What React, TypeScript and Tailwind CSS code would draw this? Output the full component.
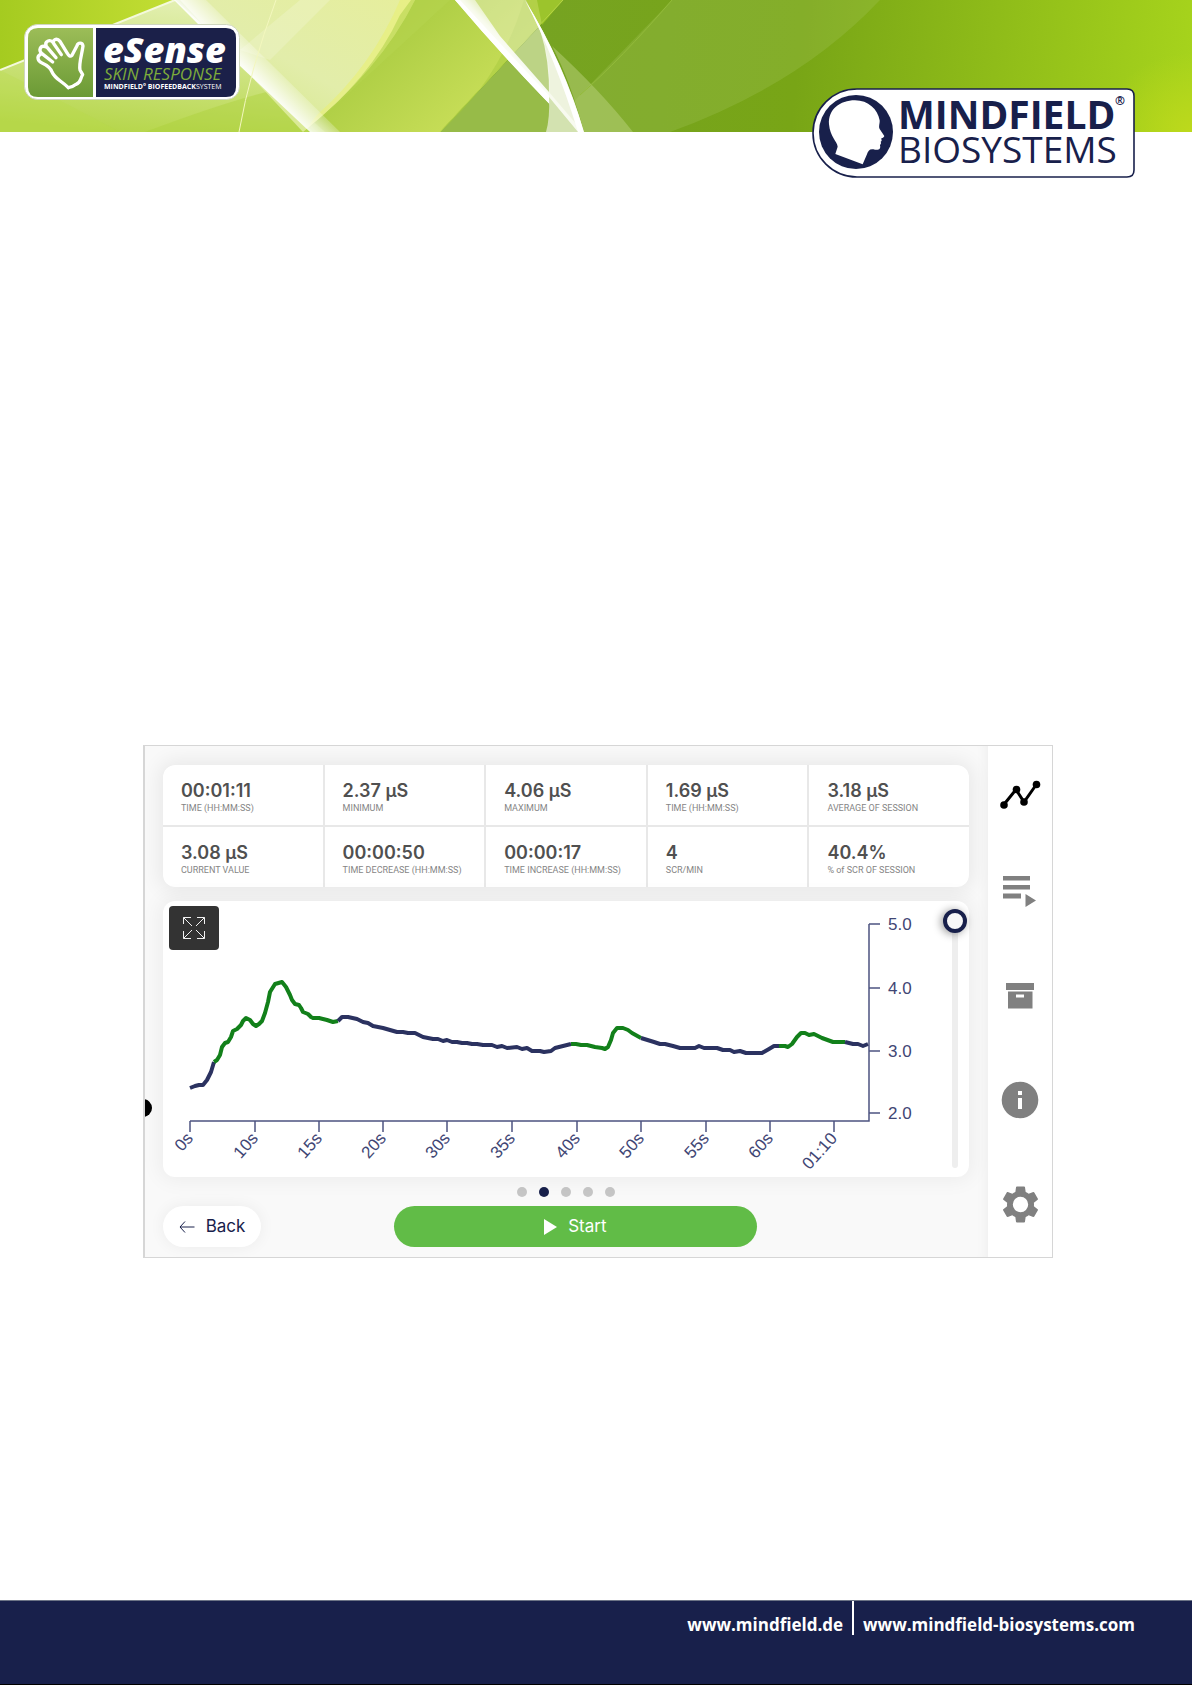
import { ReactNode } from "react"

type Stat = {
  value: string
  label: string
}

const stats: Stat[] = [
  { value: "00:01:11", label: "TIME (HH:MM:SS)" },
  { value: "2.37 µS", label: "MINIMUM" },
  { value: "4.06 µS", label: "MAXIMUM" },
  { value: "1.69 µS", label: "TIME (HH:MM:SS)" },
  { value: "3.18 µS", label: "AVERAGE OF SESSION" },
  { value: "3.08 µS", label: "CURRENT VALUE" },
  { value: "00:00:50", label: "TIME DECREASE (HH:MM:SS)" },
  { value: "00:00:17", label: "TIME INCREASE (HH:MM:SS)" },
  { value: "4", label: "SCR/MIN" },
  { value: "40.4%", label: "% of SCR OF SESSION" },
]

const xTicks = [
  { x: 27, label: "0s" },
  { x: 92, label: "10s" },
  { x: 156, label: "15s" },
  { x: 220, label: "20s" },
  { x: 284, label: "30s" },
  { x: 349, label: "35s" },
  { x: 414, label: "40s" },
  { x: 478, label: "50s" },
  { x: 543, label: "55s" },
  { x: 607, label: "60s" },
  { x: 671, label: "01:10" },
]

const yTicks = [
  { y: 23, label: "5.0" },
  { y: 87, label: "4.0" },
  { y: 150, label: "3.0" },
  { y: 212, label: "2.0" },
]

// green segments are the skin conductance responses
const segments = [
  { scr: false, points: "27,187 32,185 36,184 40,184 44,179 48,171 51,161" },
  {
    scr: true,
    points:
      "51,161 54,159 57,154 58,150 59,146 62,142 65,141 68,136 70,130 74,128 78,124 80,120 83,117 87,119 90,123 93,125 96,123 99,120 102,112 105,101 107,91 112,83 119,81 123,86 127,94 129,99 132,103 136,104 138,107 140,111 145,113 148,116 150,117 156,117 164,119 170,121 175,120",
  },
  {
    scr: false,
    points:
      "175,120 179,116 185,116 194,118 200,121 205,122 210,125 220,127 234,131 240,131 245,132 252,132 260,136 270,138 275,138 280,140 284,139 289,141 294,141 299,142 304,142 309,143 314,143 320,144 329,144 334,146 339,145 344,147 354,146 359,148 364,147 369,150 377,150 381,151 388,150 392,147 400,145 408,143",
  },
  {
    scr: true,
    points:
      "408,143 413,143 418,144 424,144 432,146 439,147 442,148 445,146 448,139 450,132 454,127 460,127 465,129 469,132 478,137",
  },
  {
    scr: false,
    points:
      "478,137 491,141 497,143 502,143 510,145 517,147 532,147 536,145 541,147 554,147 560,149 567,149 571,151 577,150 583,152 599,152 606,148 611,145 616,145",
  },
  { scr: true, points: "616,145 622,145 625,146 629,143 634,136 638,132 642,132 646,134 651,133 659,137 670,141 682,141" },
  { scr: false, points: "682,141 690,143 695,143 700,145 705,143" },
]

const HeaderArt = () => (
  <svg className="block h-full w-full" viewBox="0 0 1192 132" preserveAspectRatio="none" aria-hidden="true">
    <defs>
      <linearGradient id="lime" x1="0" x2="1" y1="0" y2="0">
        <stop offset="0" stopColor="#a5cb20" />
        <stop offset="1" stopColor="#c3de34" />
      </linearGradient>
      <linearGradient id="mist" x1="0.6" x2="0.35" y1="0" y2="1">
        <stop offset="0" stopColor="#e4f0b4" />
        <stop offset="1" stopColor="#b6d64b" />
      </linearGradient>
      <linearGradient id="pale" x1="0" x2="1" y1="1" y2="0">
        <stop offset="0" stopColor="#cfe57c" />
        <stop offset="0.5" stopColor="#e2edaa" />
        <stop offset="1" stopColor="#e6ee9c" />
      </linearGradient>
      <linearGradient id="mid" gradientUnits="userSpaceOnUse" x1="380" x2="470" y1="20" y2="120">
        <stop offset="0" stopColor="#a9cb41" />
        <stop offset="1" stopColor="#c8de58" />
      </linearGradient>
      <linearGradient id="leaf" gradientUnits="userSpaceOnUse" x1="540" x2="1192" y1="0" y2="60">
        <stop offset="0" stopColor="#76a322" />
        <stop offset="0.4" stopColor="#78a516" />
        <stop offset="1" stopColor="#a6d31c" />
      </linearGradient>
      {/* both ribbons fade away from their lower left edge */}
      <linearGradient id="ribbonLeft" gradientUnits="userSpaceOnUse" x1="240" x2="262" y1="66" y2="44">
        <stop offset="0" stopColor="#fff" stopOpacity="0.95" />
        <stop offset="1" stopColor="#fff" stopOpacity="0" />
      </linearGradient>
      <linearGradient id="ribbonRight" gradientUnits="userSpaceOnUse" x1="508" x2="532" y1="60" y2="36">
        <stop offset="0" stopColor="#fff" />
        <stop offset="0.3" stopColor="#fff" stopOpacity="0.85" />
        <stop offset="1" stopColor="#fff" stopOpacity="0" />
      </linearGradient>
      <radialGradient id="corner" cx="1" cy="1" r="1">
        <stop offset="0" stopColor="#bdd91c" />
        <stop offset="0.6" stopColor="#bdd91c" stopOpacity="0" />
      </radialGradient>
    </defs>
    <rect width="1192" height="132" fill="url(#leaf)" />
    <rect x="1040" width="152" height="132" fill="url(#corner)" />
    <path d="M580 95L672 0H880Q800 85 670 132H545Z" fill="#a6c45c" fillOpacity="0.28" />
    <path d="M0 0H563L440 132H0Z" fill="url(#mid)" />
    <path d="M537 0H563L542 25Z" fill="#96c11f" />
    <path d="M540 26 L440 132 H584Z" fill="#97bb48" />
    <path d="M563 0 L440 132" stroke="#bcd84c" strokeWidth="1" />
    <path d="M440 132Q500 80 524 0H563L440 132Z" fill="#a3c73c" fillOpacity="0.45" />
    <path d="M0 0H175L0 70Z" fill="url(#lime)" />
    <path d="M0 70L175 0L325 132H0Z" fill="url(#mist)" />
    <path d="M0 70L175 0" stroke="#f4f9dc" strokeWidth="2" />
    <path d="M0 70 Q60 100 120 132 H0Z" fill="#b9dd45" fillOpacity="0.25" />
    <path d="M145 132 Q230 100 275 90 L315 132Z" fill="#abd038" fillOpacity="0.4" />
    <path d="M180 0H415Q380 70 303 132Z" fill="url(#pale)" />
    <path d="M330 0 L270 60 L240 50 L300 0Z" fill="#f1f5cc" fillOpacity="0.4" />
    <path d="M415 0Q380 70 303 132L318 114Q372 66 400 0Z" fill="#e8ef7c" fillOpacity="0.7" />
    <path d="M400 15L411 0H450L400 46L325 115L303 132Q370 80 400 15Z" fill="#b6d44e" fillOpacity="0.6" />
    <path d="M174 0H206L340 132H310L240 66Z" fill="url(#ribbonLeft)" />
    <path d="M276 0Q250 70 239 132" fill="none" stroke="#f3f7be" strokeWidth="1" />
    <path d="M455 0H526L540 28Q553 70 549 95L580 132Q510 60 455 0Z" fill="#f4f8e2" fillOpacity="0.4" />
    <path d="M455 0Q510 65 577 132H583L549 92L500 36L475 0Z" fill="url(#ribbonRight)" />
    <path d="M455 0Q510 65 577 132H583Q520 65 460 0Z" fill="#ffffff" fillOpacity="0.9" />
    <path d="M525 0Q565 65 584 132H574L549 99Q550 60 540 30Q533 15 525 0Z" fill="#f7faee" fillOpacity="0.9" />
    <path d="M525 0Q562 60 584 132H578Q556 60 525 0Z" fill="#ffffff" />
    <path d="M549 97Q550 118 546 132H578Z" fill="#d3e2b0" />
    <path d="M552 46Q600 90 633 132H584Q570 80 552 46Z" fill="#b9d27c" fillOpacity="0.5" />
    <path d="M672 0Q620 60 580 95" fill="none" stroke="#93bb3a" strokeWidth="1" />
  </svg>
)

const ESenseLogo = () => (
  <svg
    className="block h-[76px] w-[216px] font-['Open_Sans',sans-serif]"
    viewBox="0 0 216 76"
    role="img"
    aria-label="eSense Skin Response"
  >
    <defs>
      <linearGradient id="palm" x1="0" x2="0" y1="0" y2="1">
        <stop offset="0" stopColor="#9cbd58" />
        <stop offset="1" stopColor="#6b9a35" />
      </linearGradient>
    </defs>
    <rect x="0.5" y="0.5" width="215" height="75" rx="13" fill="#fff" stroke="#cfd6bf" />
    <path d="M14 4H69V73H14Q4 73 4 63V14Q4 4 14 4Z" fill="url(#palm)" />
    <path d="M72 4H202Q212 4 212 14V63Q212 73 202 73H72Z" fill="#1b2049" />
    <g
      transform="scale(0.3333)"
      fill="none"
      stroke="#fff"
      strokeWidth="10"
      strokeLinecap="round"
      strokeLinejoin="round"
    >
      <path d="M133 191C144 190 150 186 156 181C172 176 168 164 176 152L168 138C164 118 174 90 177 66C175 54 162 56 159 65L144 94C139 99 134 96 130 88L108 52C98 40 82 48 90 60L112 92" />
      <path d="M88 56C78 44 60 52 67 67L96 101" />
      <path d="M64 68C49 63 42 79 54 89L86 114" />
      <path d="M50 91C36 98 42 112 54 117C70 124 80 132 84 144C94 166 110 168 133 191" />
    </g>
    <text x="79" y="39" fontSize="36" fontWeight="800" fontStyle="italic" fill="#fff">
      eSense
    </text>
    <text x="80" y="56" fontSize="17" fontStyle="italic" fill="#7dab3b">
      SKIN RESPONSE
    </text>
    <text x="80" y="65" fontSize="7" fontWeight="700" fill="#fff">
      MINDFIELD° BIOFEEDBACK<tspan fontWeight="400">SYSTEM</tspan>
    </text>
  </svg>
)

const MindfieldLogo = () => (
  <svg
    className="block h-[90px] w-[323px] font-['Open_Sans',sans-serif]"
    viewBox="0 0 323 90"
    role="img"
    aria-label="Mindfield Biosystems"
  >
    <path
      d="M45 1H315Q322 1 322 8V82Q322 89 315 89H45A44 44 0 0 1 45 1Z"
      fill="#fff"
      stroke="#18204b"
      strokeWidth="1.6"
    />
    <circle cx="44" cy="44" r="37" fill="#18204b" />
    <path
      transform="translate(-2 -2) scale(0.3333)"
      fill="#fff"
      d="M76 204L83 182C82 168 60 152 57 115C54 70 90 43 135 43C175 43 203 70 209 103C210 112 205 122 209 129L223 150C222 155 216 156 213 158C217 162 215 165 212 167C214 171 213 174 210 177C213 190 206 193 195 191C180 187 175 192 170 207L158 235Z"
    />
    <g fill="#18204b">
      <text x="86" y="41" fontSize="39" fontWeight="700">
        MINDFIELD
      </text>
      <text x="86" y="75" fontSize="37">
        BIOSYSTEMS
      </text>
      <text x="303" y="17" fontSize="12" fontWeight="700">
        ®
      </text>
    </g>
  </svg>
)

const ExpandIcon = () => (
  <svg width="24" height="24" viewBox="0 0 24 24" fill="none" stroke="#f1f1f1" strokeWidth="1" aria-hidden="true">
    <path d="M1.500 8V1.500H9M1.500 1.500L10 10M15 1.500H22.500V8M22.500 1.500L14 10M1.500 15V22.500H9M1.500 22.500L10 14M15 22.500H22.500V15M22.500 22.500L14 14" />
  </svg>
)

const Chart = () => (
  <svg
    className="block min-w-0 flex-1 font-['Liberation_Sans',sans-serif]"
    viewBox="0 0 780 276"
    role="img"
    aria-label="Skin conductance over time"
  >
    <g stroke="#4c5380" strokeWidth="1.5" fill="none">
      <path d="M27 220H706V23" />
      {xTicks.map((tick) => (
        <path key={tick.x} d={`M${tick.x} 220V231`} />
      ))}
      {yTicks.map((tick) => (
        <path key={tick.y} d={`M706 ${tick.y}H717`} />
      ))}
    </g>
    <g fill="#3f4674" fontSize="17">
      {xTicks.map((tick) => (
        <text key={tick.x} textAnchor="end" transform={`translate(${tick.x + 4} 238) rotate(-48)`}>
          {tick.label}
        </text>
      ))}
      {yTicks.map((tick) => (
        <text key={tick.y} x="725" y={tick.y + 6}>
          {tick.label}
        </text>
      ))}
    </g>
    {segments.map(({ scr, points }) => (
      <polyline
        key={points}
        points={points}
        fill="none"
        stroke={scr ? "#12801a" : "#2b3260"}
        strokeWidth="4"
        strokeLinejoin="round"
      />
    ))}
  </svg>
)

const NavButton = ({ label, children }: { label: string; children: ReactNode }) => (
  <button type="button" aria-label={label} className="flex h-12 w-12 items-center justify-center text-[#808080]">
    {children}
  </button>
)

const Sidebar = () => (
  <nav className="flex w-16 shrink-0 flex-col items-center justify-between bg-white pt-[33px] pb-[29px]">
    <button type="button" aria-label="Measurement" className="flex h-8 w-12 items-center justify-center">
      <svg width="42" height="30" viewBox="0 0 42 30" aria-hidden="true">
        <path d="M4.500 25L17 9.500L25 22L37 5" fill="none" stroke="#000" strokeWidth="3" />
        <circle cx="5" cy="25" r="3.800" />
        <circle cx="17.500" cy="9.500" r="3.800" />
        <circle cx="25" cy="22" r="3.800" />
        <circle cx="37.500" cy="4.500" r="3.800" />
      </svg>
    </button>
    <NavButton label="Procedures">
      <svg width="34" height="32" viewBox="0 0 34 32" fill="currentColor" aria-hidden="true">
        <path d="M0 1H27V5.500H0ZM0 10H27V14.500H0ZM0 18.500H18V23.500H0ZM22.500 19L33 25.500L22.500 32Z" />
      </svg>
    </NavButton>
    <NavButton label="Archive">
      <svg width="28" height="26" viewBox="0 0 28 26" fill="currentColor" fillRule="evenodd" aria-hidden="true">
        <path d="M0 0H28V7H0ZM2 8.500H26.500V25.500H2ZM10 11.500V14.500H18V11.500Z" />
      </svg>
    </NavButton>
    <NavButton label="Information">
      <svg width="38" height="38" viewBox="0 0 38 38" aria-hidden="true">
        <circle cx="19" cy="19" r="18.300" fill="currentColor" />
        <path d="M17 10H21V14H17ZM17 17H21V28H17Z" fill="#fff" />
      </svg>
    </NavButton>
    <NavButton label="Settings">
      <svg width="45" height="45" viewBox="0 0 24 24" fill="currentColor" className="shrink-0" aria-hidden="true">
        <path d="M19.140 12.940c.04-.3.060-.61.060-.94 0-.32-.02-.64-.07-.94l2.030-1.580a.49.490 0 0 0 .12-.61l-1.920-3.320a.49.490 0 0 0-.59-.22l-2.390.96c-.5-.38-1.030-.7-1.620-.94l-.36-2.540a.48.480 0 0 0-.48-.41h-3.840c-.24 0-.43.170-.47.410l-.36 2.540c-.59.240-1.130.57-1.620.94l-2.390-.96c-.22-.08-.47 0-.59.220L2.740 8.870c-.12.210-.08.470.12.610l2.030 1.580c-.05.300-.09.630-.09.940s.02.640.070.940l-2.030 1.580a.49.490 0 0 0-.12.610l1.920 3.320c.12.220.37.290.59.220l2.390-.96c.5.380 1.030.7 1.620.94l.36 2.540c.05.240.24.410.48.410h3.840c.24 0 .44-.17.47-.41l.36-2.540c.59-.24 1.130-.56 1.620-.94l2.390.96c.22.080.47 0 .59-.22l1.920-3.320c.12-.22.070-.47-.12-.61l-2.010-1.580zM12 16.100a4.100 4.100 0 1 1 0-8.200 4.100 4.100 0 0 1 0 8.200z" />
      </svg>
    </NavButton>
  </nav>
)

const App = () => {
  return (
    <div className="flex min-h-screen flex-col bg-white">
      <header className="relative h-[132px]">
        <HeaderArt />
        <div className="absolute top-6 left-6">
          <ESenseLogo />
        </div>
        <div className="absolute top-[88px] right-[57px]">
          <MindfieldLogo />
        </div>
      </header>

      <main className="flex-1 pt-[613px] pr-[139px] pb-20 pl-[143px]">
        <section className="relative flex overflow-hidden border border-l-2 border-[#d6d6d6] bg-[#f9f9f9] font-[Inter,sans-serif]">
          <div className="absolute top-[353px] -left-[11px] h-[18px] w-[18px] rounded-full bg-black" />
          <div className="min-w-0 flex-1 pt-[19px] pr-[19px] pb-[10px] pl-[18px] shadow-[inset_-12px_0_14px_-12px_rgba(0,0,0,0.06)]">
            <dl className="grid grid-cols-5 gap-[2px] overflow-hidden rounded-xl bg-[#e8e8e8] shadow-[0_0_20px_4px_rgba(0,0,0,0.07)]">
              {stats.map(({ value, label }, i) => (
                <div key={i} className="flex h-[60px] flex-col-reverse justify-end bg-white pt-[14px] pl-[18px]">
                  <dt className="font-[Roboto,sans-serif] text-[9px] leading-[12px] whitespace-nowrap text-[#858585]">
                    {label}
                  </dt>
                  <dd className="text-[18px] leading-[23px] font-semibold text-[#505050]">{value}</dd>
                </div>
              ))}
            </dl>

            <div className="relative mt-[14px] flex rounded-xl bg-white shadow-[0_0_20px_4px_rgba(0,0,0,0.05)]">
              <Chart />
              <button
                type="button"
                aria-label="Full screen"
                className="absolute top-[5px] left-[6px] flex h-11 w-[50px] items-center justify-center rounded bg-[#333333]"
              >
                <ExpandIcon />
              </button>
              <input
                type="range"
                aria-label="Chart zoom"
                min={0}
                max={100}
                defaultValue={0}
                className="mt-2 mr-[2px] h-[259px] w-6 appearance-none bg-transparent [writing-mode:vertical-lr] [&::-webkit-slider-runnable-track]:w-[6px] [&::-webkit-slider-runnable-track]:rounded-full [&::-webkit-slider-runnable-track]:bg-[#eeeeee] [&::-webkit-slider-thumb]:-ml-[9px] [&::-webkit-slider-thumb]:h-6 [&::-webkit-slider-thumb]:w-6 [&::-webkit-slider-thumb]:appearance-none [&::-webkit-slider-thumb]:rounded-full [&::-webkit-slider-thumb]:border-4 [&::-webkit-slider-thumb]:border-[#18204b] [&::-webkit-slider-thumb]:bg-[#f8f8f8] [&::-webkit-slider-thumb]:shadow-[-2px_1px_8px_rgba(0,0,0,0.4)]"
              />
            </div>

            <div className="mt-[10px] flex justify-center gap-3">
              {[0, 1, 2, 3, 4].map((page) => (
                <button
                  key={page}
                  type="button"
                  aria-label={`Page ${page + 1}`}
                  className={page === 1 ? "h-[10px] w-[10px] rounded-full bg-[#18204b]" : "h-[10px] w-[10px] rounded-full bg-[#c6c6c6]"}
                />
              ))}
            </div>

            <div className="mt-[9px] flex">
              <button
                type="button"
                className="flex h-[41px] w-[98px] items-center justify-center gap-[11px] rounded-full bg-white text-[17px] text-[#18204b] shadow-[0_0_16px_rgba(0,0,0,0.06)]"
              >
                <svg width="16" height="12" viewBox="0 0 16 12" fill="none" stroke="#18204b" aria-hidden="true">
                  <path d="M15.500 6H1M6 0.500L1 6L6 11.500" />
                </svg>
                Back
              </button>
              <button
                type="button"
                className="ml-[133px] flex h-[41px] w-[45%] items-center justify-center gap-[11px] rounded-full bg-[#61bc47] text-[17px] text-white"
              >
                <svg width="13" height="16" viewBox="0 0 13 16" fill="#fff" aria-hidden="true">
                  <path d="M0 0L13 8L0 16Z" />
                </svg>
                Start
              </button>
            </div>
          </div>
          <Sidebar />
        </section>
      </main>

      <footer className="flex h-[85px] items-start justify-end border-t border-b border-t-[#6c7486] border-b-black bg-[#18204b] pr-[57px] font-['Open_Sans',sans-serif] text-[17px] leading-[48px] font-bold text-white">
        <a href="https://www.mindfield.de">www.mindfield.de</a>
        <span className="mx-[9px] h-[34px] w-[2px] bg-white" />
        <a href="https://www.mindfield-biosystems.com">www.mindfield-biosystems.com</a>
      </footer>
    </div>
  )
}

export default App
